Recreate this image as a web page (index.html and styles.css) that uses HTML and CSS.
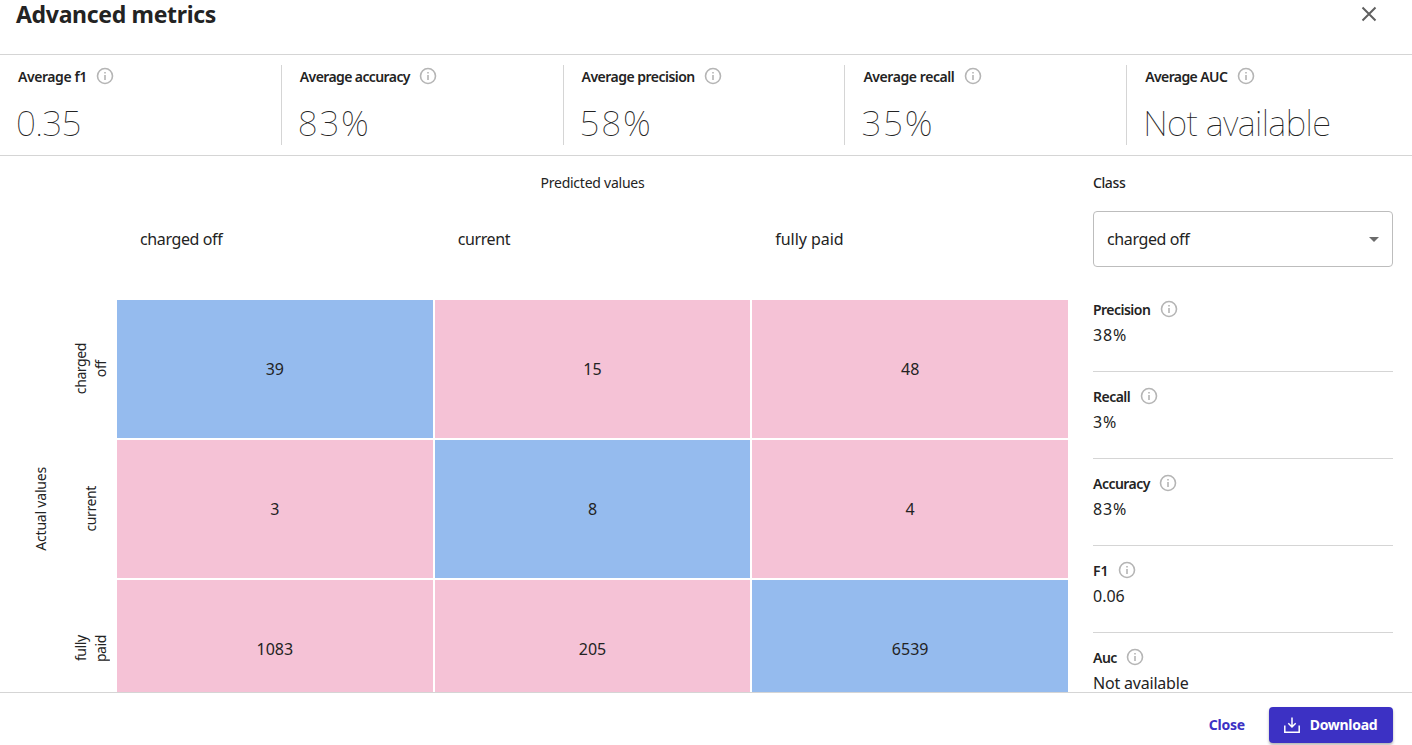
FILE: index.html
```html
<!DOCTYPE html>
<html lang="en">
<head>
<meta charset="utf-8">
<title>Advanced metrics</title>
<link rel="stylesheet" href="styles.css">
</head>
<body>
<svg class="defs" width="0" height="0" aria-hidden="true">
  <symbol id="info" viewBox="0 0 20 20">
    <circle cx="10" cy="10" r="7.5" fill="none" stroke="currentColor" stroke-width="1.6"/>
    <path d="M9.2 6h1.6v1.6H9.2zM9.2 9h1.6v5H9.2z" fill="currentColor"/>
  </symbol>
</svg>
<div class="dialog">
  <header class="header">
    <h1 class="title"><span>Advanced metrics</span></h1>
    <button class="dismiss" aria-label="Dismiss"><svg width="16" height="16" viewBox="0 0 16 16"><path d="M1.5 1.5l13 13M14.5 1.5l-13 13" fill="none" stroke="#606060" stroke-width="2"/></svg></button>
  </header>
  <section class="summary">
    <div class="stat"><div class="label loose"><span>Average f1</span><svg class="info"><use href="#info"/></svg></div><div class="big decimal"><span>0.35</span></div></div>
    <div class="stat"><div class="label tight"><span>Average accuracy</span><svg class="info"><use href="#info"/></svg></div><div class="big"><span>83%</span></div></div>
    <div class="stat"><div class="label"><span>Average precision</span><svg class="info"><use href="#info"/></svg></div><div class="big"><span>58%</span></div></div>
    <div class="stat"><div class="label loose"><span>Average recall</span><svg class="info"><use href="#info"/></svg></div><div class="big"><span>35%</span></div></div>
    <div class="stat"><div class="label tight"><span>Average AUC</span><svg class="info"><use href="#info"/></svg></div><div class="big words"><span>Not available</span></div></div>
  </section>
  <main class="content">
    <div class="actual"><span>Actual values</span></div>
    <div class="chart">
      <div class="predicted"><span>Predicted values</span></div>
      <div class="columns"><span>charged off</span><span>current</span><span class="wide">fully paid</span></div>
      <div class="matrix">
        <div class="row-label"><span>charged<br>off</span></div>
        <div class="cell hit">39</div><div class="cell">15</div><div class="cell">48</div>
        <div class="row-label"><span>current</span></div>
        <div class="cell">3</div><div class="cell hit">8</div><div class="cell">4</div>
        <div class="row-label"><span>fully<br>paid</span></div>
        <div class="cell">1083</div><div class="cell">205</div><div class="cell hit">6539</div>
      </div>
    </div>
    <aside class="side">
      <div class="class-label">Class</div>
      <div class="select"><span>charged off</span><svg width="10" height="5" viewBox="0 0 10 5"><path d="M0 0h10L5 5z" fill="#6b6b6b"/></svg></div>
      <div class="metric"><div class="label"><span>Precision</span><svg class="info"><use href="#info"/></svg></div><div class="value percent">38%</div></div>
      <div class="metric"><div class="label"><span>Recall</span><svg class="info"><use href="#info"/></svg></div><div class="value percent">3%</div></div>
      <div class="metric"><div class="label"><span>Accuracy</span><svg class="info"><use href="#info"/></svg></div><div class="value percent">83%</div></div>
      <div class="metric"><div class="label short"><span>F1</span><svg class="info"><use href="#info"/></svg></div><div class="value">0.06</div></div>
      <div class="metric"><div class="label"><span>Auc</span><svg class="info"><use href="#info"/></svg></div><div class="value words">Not available</div></div>
    </aside>
  </main>
  <footer class="footer">
    <button class="close">Close</button>
    <button class="download"><svg width="18" height="18" viewBox="0 0 18 18"><path d="M9 1.5v9.2M5.3 7.3L9 11l3.7-3.7M1.8 9.5v6.7h14.4V9.5" fill="none" stroke="#fff" stroke-width="1.5"/></svg><span>Download</span></button>
  </footer>
</div>
</body>
</html>
```
FILE: styles.css
```css
* { box-sizing: border-box; }
body { margin: 0; font-family: "Noto Sans", sans-serif; font-size: 16px; color: #232323; background: #fff; }
button { font: inherit; letter-spacing: inherit; border: 0; padding: 0; background: none; }
.defs { display: none; }
.dialog { height: 745px; display: flex; flex-direction: column; overflow: hidden; }
.header { height: 55px; flex: none; border-bottom: 1px solid #d5d5d5; display: flex; justify-content: space-between; padding: 0 35px 0 16px; }
.title { margin: 0; font-size: 23px; line-height: 29px; font-weight: 700; letter-spacing: -0.32px; }
.dismiss { height: 28px; display: flex; align-items: center; }
.summary { height: 101px; flex: none; border-bottom: 1px solid #d5d5d5; padding: 10px 0; display: grid; grid-template-columns: repeat(5, 281.8px); grid-template-rows: 80px; }
.stat { padding-left: 18px; border-right: 1px solid #d5d5d5; }
.stat:last-child { border-right: 0; }
.label { display: flex; align-items: center; gap: 8px; height: 22px; font-size: 14px; font-weight: 600; letter-spacing: -0.52px; }
.label.loose { letter-spacing: -0.43px; }
.label.tight { letter-spacing: -0.6px; }
.label.short { letter-spacing: -0.1px; }
.label span { padding-right: 0.4px; }
.info { width: 20px; height: 20px; color: #b5b5b5; }
.big { font-size: 35px; line-height: 48px; margin: 12px 0 0 -2px; font-weight: 100; letter-spacing: 1.7px; white-space: nowrap; }
.big.decimal { letter-spacing: -0.7px; }
.big.words { letter-spacing: -0.55px; }
.content { flex: 1; min-height: 0; overflow: hidden; display: flex; }
.actual { width: 65px; height: 706px; flex: none; display: flex; align-items: center; justify-content: center; padding-left: 16px; font-size: 14px; letter-spacing: -0.2px; }
.actual span, .row-label span { writing-mode: vertical-rl; transform: rotate(180deg); white-space: nowrap; }
.chart { width: 1003px; flex: none; }
.predicted { padding: 17px 0 0 52px; height: 56px; text-align: center; font-size: 14px; line-height: 20px; letter-spacing: -0.24px; }
.columns { display: grid; grid-template-columns: repeat(3, 317.67px); height: 88px; padding: 15px 0 0 75px; line-height: 24px; letter-spacing: -0.38px; }
.columns .wide { letter-spacing: -0.05px; }
.matrix { display: grid; grid-template-columns: 50px repeat(3, 1fr); grid-auto-rows: 138px; gap: 2px; }
.row-label { display: flex; align-items: center; justify-content: center; padding-left: 2px; font-size: 14px; line-height: 20px; letter-spacing: -0.4px; text-align: center; }
.cell { background: #f5c2d6; display: flex; align-items: center; justify-content: center; }
.hit { background: #95bbee; }
.side { width: 325px; padding: 17px 0 0 25px; flex: none; }
.class-label { font-size: 14px; line-height: 20px; font-weight: 500; letter-spacing: -0.4px; height: 38px; }
.select { height: 56px; border: 1px solid #bdbdbd; border-radius: 4px; padding: 0 13px; display: flex; align-items: center; justify-content: space-between; margin-bottom: 18px; letter-spacing: -0.38px; }
.metric { height: 87px; padding-top: 13px; border-bottom: 1px solid #d5d5d5; }
.value { line-height: 16px; margin-top: 7px; }
.percent { letter-spacing: 0.9px; }
.value.words { letter-spacing: -0.2px; }
.footer { height: 53px; flex: none; border-top: 1px solid #d5d5d5; display: flex; justify-content: flex-end; align-items: flex-start; padding: 14px 19px 0 0; gap: 24px; font-size: 14px; line-height: 20px; font-weight: 700; letter-spacing: -0.2px; }
.close { color: #3c31c4; height: 36px; padding-bottom: 1px; }
.download { width: 124px; height: 36px; border-radius: 4px; background: #3c31c4; color: #fff; display: flex; align-items: center; justify-content: center; gap: 9px; padding-right: 2px; letter-spacing: -0.3px; box-shadow: 0 2px 3px rgba(0,0,0,.3); }
.download span { padding-bottom: 1px; }
```
